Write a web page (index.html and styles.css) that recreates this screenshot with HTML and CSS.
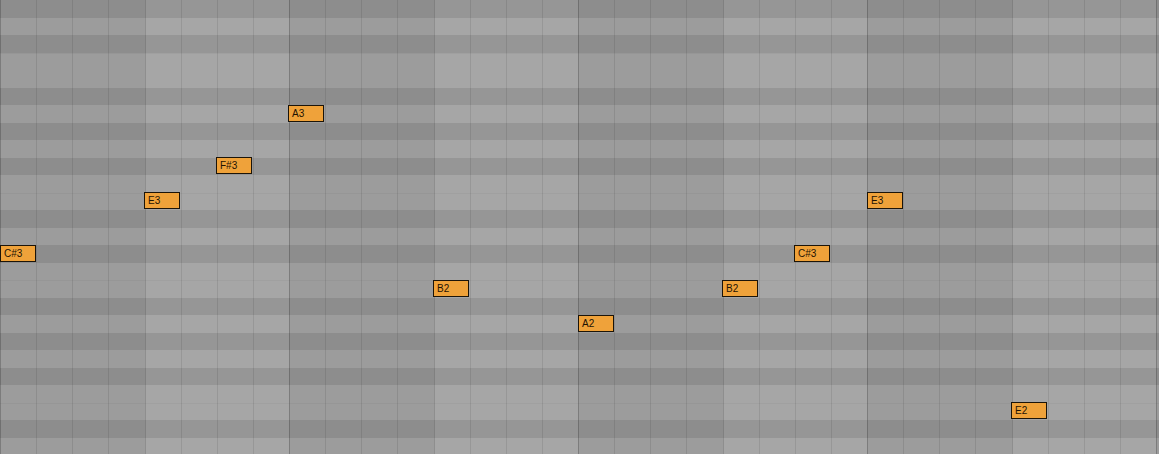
FILE: index.html
```html
<!DOCTYPE html>
<html>
<head>
<meta charset="utf-8">
<link rel="stylesheet" href="styles.css">
</head>
<body>
<div class="roll">
  <div class="lanes">
    <div class="lane black"></div>
    <div class="lane white"></div>
    <div class="lane black"></div>
    <div class="lane white sep"></div>
    <div class="lane white"></div>
    <div class="lane black"></div>
    <div class="lane white"></div>
    <div class="lane black"></div>
    <div class="lane white"></div>
    <div class="lane black"></div>
    <div class="lane white"></div>
    <div class="lane white sep"></div>
    <div class="lane black"></div>
    <div class="lane white"></div>
    <div class="lane black"></div>
    <div class="lane white"></div>
    <div class="lane white sep"></div>
    <div class="lane black"></div>
    <div class="lane white"></div>
    <div class="lane black"></div>
    <div class="lane white"></div>
    <div class="lane black"></div>
    <div class="lane white"></div>
    <div class="lane white sep"></div>
    <div class="lane black"></div>
    <div class="lane white"></div>
  </div>
  <div class="cols">
    <div></div><div></div><div></div><div></div><div></div><div></div><div></div><div></div>
    <div></div><div></div><div></div><div></div><div></div><div></div><div></div><div></div>
    <div></div><div></div><div></div><div></div><div></div><div></div><div></div><div></div>
    <div></div><div></div><div></div><div></div><div></div><div></div><div></div><div></div>
    <div></div>
  </div>
  <div class="notes">
    <div class="note" style="left:0px;top:245px">C#3</div>
    <div class="note" style="left:144px;top:192px">E3</div>
    <div class="note" style="left:216px;top:157px">F#3</div>
    <div class="note" style="left:288px;top:105px">A3</div>
    <div class="note" style="left:433px;top:280px">B2</div>
    <div class="note" style="left:578px;top:315px">A2</div>
    <div class="note" style="left:722px;top:280px">B2</div>
    <div class="note" style="left:794px;top:245px">C#3</div>
    <div class="note" style="left:867px;top:192px">E3</div>
    <div class="note" style="left:1011px;top:402px">E2</div>
  </div>
</div>
</body>
</html>
```

FILE: styles.css
```css
html, body {
  margin: 0;
  padding: 0;
  background: #a5a5a5;
}
.roll {
  position: relative;
  width: 1159px;
  height: 454px;
  overflow: hidden;
  --cw: 36.125px;
  --rh: 17.5px;
}
.lanes {
  display: flex;
  flex-direction: column;
}
.lane {
  height: var(--rh);
  flex: none;
  box-sizing: border-box;
}
.lane.white { background: #a6a6a6; }
.lane.black { background: #969696; }
.lane.sep { border-top: 1px solid #a0a0a0; }
.cols {
  position: absolute;
  inset: 0;
  display: grid;
  grid-template-columns: repeat(33, var(--cw));
}
.cols > div {
  border-left: 1px solid rgba(0, 0, 0, 0.09);
}
.cols > div:first-child { border-left-color: transparent; }
.cols > div:nth-child(8n+1),
.cols > div:nth-child(8n+2),
.cols > div:nth-child(8n+3),
.cols > div:nth-child(8n+4) {
  background: rgba(0, 0, 0, 0.06);
}
.cols > div:nth-child(4n+1) {
  border-left-color: rgba(0, 0, 0, 0.14);
}
.cols > div:nth-child(8n+1) {
  border-left-color: rgba(0, 0, 0, 0.2);
}
.notes {
  position: absolute;
  inset: 0;
}
.note {
  position: absolute;
  width: 36px;
  height: 17px;
  box-sizing: border-box;
  background: #efa23a;
  border: 1px solid #1c1408;
  color: #1f1303;
  font-family: "Liberation Sans", Arial, sans-serif;
  font-size: 10px;
  line-height: 15px;
  padding-left: 3px;
  white-space: nowrap;
}
```
